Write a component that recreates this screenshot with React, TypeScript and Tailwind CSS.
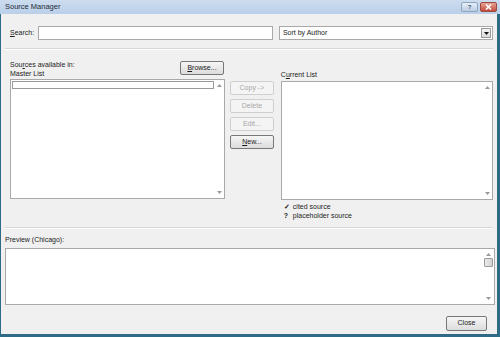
import React from 'react';

const font = "font-['Liberation_Sans',Arial,sans-serif]";

function Btn({ label, u, disabled, className = '' }: { label: string; u?: number; disabled?: boolean; className?: string }) {
  const text =
    u === undefined ? (
      label
    ) : (
      <>
        {label.slice(0, u)}
        <span className="underline">{label[u]}</span>
        {label.slice(u + 1)}
      </>
    );
  return (
    <div
      className={
        'flex h-[14px] items-center justify-center rounded-[2px] border text-[7px] ' +
        (disabled
          ? 'border-[#cfcfcf] bg-[#f4f4f4] text-[#a8a8a8]'
          : 'border-[#777] bg-gradient-to-b from-[#f6f6f6] to-[#dcdcdc] text-[#1a1a1a]') +
        ' ' +
        className
      }
    >
      {text}
    </div>
  );
}

function Arrow({ up }: { up?: boolean }) {
  return (
    <svg width="5" height="3" viewBox="0 0 5 3">
      <path d={up ? 'M0 3 L2.5 0 L5 3 Z' : 'M0 0 L2.5 3 L5 0 Z'} fill="#9a9a9a" />
    </svg>
  );
}

export default function App() {
  return (
    <div className={`${font} flex h-[337px] w-[500px] flex-col overflow-hidden bg-[#2e6b84] text-[#1c1c1c]`}>
      {/* title bar */}
      <div className="flex h-[14px] items-center bg-gradient-to-b from-[#cddcee] to-[#b9d0e9] pl-[5px] pr-[3px]">
        <span className="text-[7.5px] text-[#1e2a38]">Source Manager</span>
        <div className="ml-auto flex gap-[2px]">
          <div className="flex h-[10px] w-[17px] items-center justify-center rounded-[2px] border border-[#8fa6bf] bg-gradient-to-b from-[#e6eef8] to-[#bccde2] text-[6px] font-bold text-[#3b5775]">
            ?
          </div>
          <div className="flex h-[10px] w-[17px] items-center justify-center rounded-[2px] border border-[#9a4a40] bg-gradient-to-b from-[#e7a596] to-[#c4493a]">
            <svg width="7" height="6" viewBox="0 0 7 6">
              <path d="M1 0.5 L6 5.5 M6 0.5 L1 5.5" stroke="#fff" strokeWidth="1.6" />
            </svg>
          </div>
        </div>
      </div>

      {/* body */}
      <div className="mb-[3px] ml-px mr-[3px] flex flex-1 flex-col bg-[#f0f0f0] px-[4px]">
        {/* search row */}
        <div className="mt-[12px] flex items-center">
          <span className="ml-[5px] w-[28px] text-[7px]">
            <span className="underline">S</span>earch:
          </span>
          <div className="h-[14px] w-[236px] border border-[#a9a9a9] bg-white" />
          <div className="ml-[6px] flex h-[14px] w-[215px] items-center border border-[#a9a9a9] bg-white pl-[3px] text-[7px]">
            Sort by Author
            <div className="ml-auto mr-px flex h-[10px] w-[10px] items-center justify-center border border-[#9a9a9a] bg-gradient-to-b from-[#f4f4f4] to-[#dadada]">
              <svg width="5" height="3" viewBox="0 0 5 3">
                <path d="M0 0 L2.5 3 L5 0 Z" fill="#111" />
              </svg>
            </div>
          </div>
        </div>

        <div className="mt-[8px] border-t border-[#d7d7d7] border-b border-b-white" />

        {/* lists */}
        <div className="flex">
          {/* master */}
          <div className="ml-[5px] flex w-[215px] flex-col">
            <div className="mt-[10px] flex items-start">
              <div className="flex flex-col text-[7px] leading-[9px]">
                <span>
                  Sou<span className="underline">r</span>ces available in:
                </span>
                <span>Master List</span>
              </div>
              <Btn label="Browse..." u={0} className="ml-auto mr-px mt-px w-[44px]" />
            </div>
            <div className="mt-[1px] flex h-[120px] border border-[#a9a9a9] bg-white">
              <div className="flex-1 pl-px pt-px">
                <div className="h-[8px] w-[202px] border border-[#9a9a9a] bg-white" />
              </div>
              <div className="flex w-[10px] flex-col items-center justify-between py-[4px]">
                <Arrow up />
                <Arrow />
              </div>
            </div>
          </div>

          {/* buttons */}
          <div className="ml-[5px] mt-[31px] flex w-[44px] flex-col gap-[4px]">
            <Btn label="Copy ->" disabled />
            <Btn label="Delete" disabled />
            <Btn label="Edit..." disabled />
            <Btn label="New..." u={0} />
          </div>

          {/* current */}
          <div className="ml-[7px] flex w-[213px] flex-col">
            <span className="mt-[20px] text-[7px] leading-[9px]">
              C<span className="underline">u</span>rrent List
            </span>
            <div className="mt-[2px] flex h-[119px] justify-end border border-[#a9a9a9] bg-white">
              <div className="flex w-[10px] flex-col items-center justify-between py-[4px]">
                <Arrow up />
                <Arrow />
              </div>
            </div>
            <div className="mt-[2px] flex flex-col text-[7px] leading-[9px]">
              <div className="flex">
                <span className="w-[12px] pl-[3px] font-bold">✓</span>
                <span>cited source</span>
              </div>
              <div className="flex">
                <span className="w-[12px] pl-[3px] font-bold">?</span>
                <span>placeholder source</span>
              </div>
            </div>
          </div>
        </div>

        <div className="mt-[7px] border-t border-[#d7d7d7] border-b border-b-white" />

        <span className="mt-[6px] text-[7px] leading-[9px]">Preview (Chicago):</span>
        <div className="mt-[4px] flex h-[57px] w-[490px] justify-end border border-[#a9a9a9] bg-white">
          <div className="flex w-[11px] flex-col items-center py-[4px]">
            <Arrow up />
            <div className="mt-[2px] h-[9px] w-[9px] rounded-[1px] border border-[#9a9a9a] bg-gradient-to-r from-[#eaeaea] to-[#d4d4d4]" />
            <div className="flex-1" />
            <Arrow />
          </div>
        </div>

        <div className="mt-[11px] flex justify-end">
          <Btn label="Close" className="mr-[6px] h-[15px] w-[41px]" />
        </div>
      </div>
    </div>
  );
}
